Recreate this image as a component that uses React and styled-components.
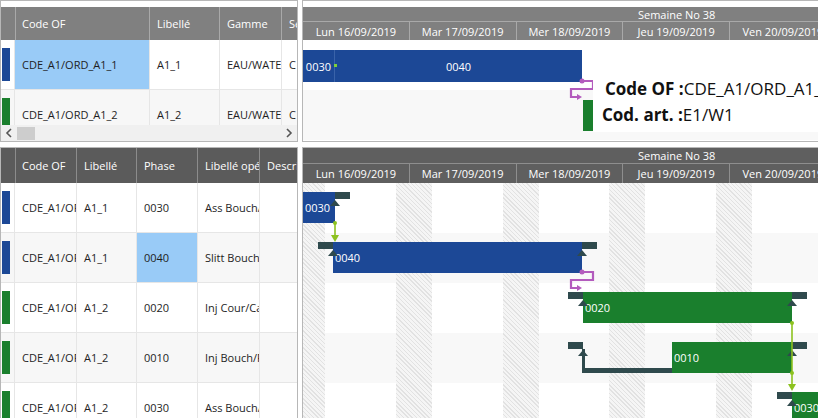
import React from "react";
import styled, { createGlobalStyle } from "styled-components";

const DAY = 106.75;
const DAYS = [
  "Lun 16/09/2019",
  "Mar 17/09/2019",
  "Mer 18/09/2019",
  "Jeu 19/09/2019",
  "Ven 20/09/2019",
  "Sam 21/09/2019",
  "Dim 22/09/2019",
];

const BLUE = "#1c4896";
const GREEN = "#1a7f2d";
const SLATE = "#2f4a4d";
const LINK = "#8dc21f";
const PURPLE = "#b35bbd";

const GlobalStyle = createGlobalStyle`
  html, body {
    margin: 0;
    padding: 0;
    background: #fff;
    overflow: hidden;
  }
  body {
    font-family: "Open Sans", "Noto Sans", sans-serif;
  }
`;

const Page = styled.div`
  width: 818px;
  height: 418px;
  display: flex;
  flex-direction: column;
  gap: 5px;
  overflow: hidden;
  background: #fff;
`;

const Section = styled.div`
  display: flex;
  gap: 4px;
  flex: none;
  height: ${({ $h }) => $h}px;
`;

const GridPanel = styled.div`
  width: 298px;
  flex: none;
  box-sizing: border-box;
  border: 1px solid #b7b7b7;
  padding-top: ${({ $pad }) => $pad || 0}px;
  display: flex;
  flex-direction: column;
  overflow: hidden;
`;

const HeaderRow = styled.div`
  display: grid;
  grid-template-columns: ${({ $cols }) => $cols};
  height: ${({ $h }) => $h}px;
  flex: none;
  background: ${({ $dark }) => ($dark ? "#5b5b5b" : "#808080")};
`;

const HeaderCell = styled.div`
  display: flex;
  align-items: center;
  padding: 0 7px;
  color: #fff;
  font-size: 11px;
  white-space: nowrap;
  overflow: hidden;
  border-right: 1px solid ${({ $dark }) => ($dark ? "#8c8c8c" : "#a9a9a9")};
`;

const Body = styled.div`
  flex: 1;
  overflow: hidden;
`;

const Row = styled.div`
  display: grid;
  grid-template-columns: ${({ $cols }) => $cols};
  height: 50px;
  background: ${({ $alt }) => ($alt ? "#f7f7f7" : "#fff")};
`;

const Cell = styled.div`
  display: flex;
  align-items: center;
  padding: 0 7px;
  font-size: 11px;
  color: #1e1e1e;
  white-space: nowrap;
  overflow: hidden;
  box-sizing: border-box;
  border-right: 1px solid #e6e6e6;
  border-bottom: 1px solid #e6e6e6;
  background: ${({ $selected }) => ($selected ? "#99cbf7" : "transparent")};
`;

const TagCell = styled.div`
  border-right: 1px solid #e6e6e6;
  border-bottom: 1px solid #e6e6e6;
  padding: 8px 0 0 1px;
  box-sizing: border-box;
`;

const ColorTag = styled.div`
  width: 8px;
  height: 33px;
  background: ${({ $color }) => $color};
`;

const ScrollBar = styled.div`
  height: 16px;
  flex: none;
  background: #f0f0f0;
  display: flex;
  align-items: center;
  padding: 0 4px;
  gap: 4px;
  color: #555;
`;

const Thumb = styled.div`
  width: 18px;
  height: 13px;
  background: #cdcdcd;
`;

const Spacer = styled.div`
  flex: 1;
`;

const GanttPanel = styled.div`
  flex: 1;
  min-width: 0;
  box-sizing: border-box;
  border: 1px solid #b7b7b7;
  border-right: none;
  padding-top: ${({ $pad }) => $pad || 0}px;
  display: flex;
  flex-direction: column;
  overflow: hidden;
`;

const Scale = styled.div`
  flex: none;
  width: ${DAY * 7}px;
  background: ${({ $dark }) => ($dark ? "#5f5f5f" : "#808080")};
  color: #fff;
  font-size: 11px;
`;

const WeekRow = styled.div`
  height: ${({ $h }) => $h}px;
  box-sizing: border-box;
  border-bottom: 1px solid ${({ $dark }) => ($dark ? "#8e8e8e" : "#a9a9a9")};
  display: flex;
  align-items: center;
  justify-content: center;
  white-space: nowrap;
`;

const DayRow = styled.div`
  height: ${({ $h }) => $h}px;
  display: flex;
`;

const DayCell = styled.div`
  flex: none;
  width: ${DAY}px;
  box-sizing: border-box;
  border-right: 1px solid ${({ $dark }) => ($dark ? "#8e8e8e" : "#a9a9a9")};
  display: flex;
  align-items: center;
  justify-content: center;
  white-space: nowrap;
`;

const Canvas = styled.div`
  position: relative;
  flex: 1;
  overflow: hidden;
`;

const Band = styled.div`
  height: 50px;
  background: ${({ $alt }) => ($alt ? "#f8f8f8" : "#fff")};
`;

const Hatch = styled.div`
  position: absolute;
  top: 0;
  bottom: 0;
  width: 36px;
  background: repeating-linear-gradient(
    45deg,
    #e2e2e2 0px,
    #e2e2e2 1px,
    #f5f5f5 1px,
    #f5f5f5 3px
  );
`;

const Bar = styled.div`
  position: absolute;
  height: ${({ $h }) => $h}px;
  background: ${({ $color }) => $color};
  color: #fff;
  font-size: 11px;
  display: flex;
  align-items: center;
  padding-left: 2px;
  box-sizing: border-box;
  white-space: nowrap;
  overflow: hidden;
`;

const Segment = styled.div`
  height: 100%;
  display: flex;
  align-items: center;
  justify-content: ${({ $center }) => ($center ? "center" : "flex-start")};
  width: ${({ $w }) => ($w ? `${$w}px` : "auto")};
  flex: ${({ $w }) => ($w ? "none" : "1")};
  border-right: ${({ $split }) => ($split ? "1px solid #3a63a9" : "none")};
`;

const Overlay = styled.svg`
  position: absolute;
  left: 0;
  top: 0;
  overflow: visible;
  pointer-events: none;
`;

const Tooltip = styled.div`
  position: absolute;
  left: 290px;
  top: 36px;
  width: 260px;
  height: 56px;
  background: #fff;
  padding-left: 12px;
  box-sizing: border-box;
  font-size: 17px;
  line-height: 26px;
  color: #111;
  white-space: nowrap;
`;

const TipLine = styled.div`
  margin-left: ${({ $shift }) => $shift || 0}px;
  b {
    font-weight: 700;
  }
`;

function TimeScale({ dark, weekH, dayH }) {
  return (
    <Scale $dark={dark}>
      <WeekRow $h={weekH} $dark={dark}>Semaine No 38</WeekRow>
      <DayRow $h={dayH}>
        {DAYS.map((d) => (
          <DayCell key={d} $dark={dark}>
            {d}
          </DayCell>
        ))}
      </DayRow>
    </Scale>
  );
}

function Chevron({ dir }) {
  return (
    <svg width="8" height="10" viewBox="0 0 8 10">
      <path
        d={dir === "left" ? "M6 1 L2 5 L6 9" : "M2 1 L6 5 L2 9"}
        fill="none"
        stroke="#555"
        strokeWidth="1.6"
      />
    </svg>
  );
}

const TOP_COLS = "14px 135px 70px 62px 60px";
const TOP_HEAD = ["Code OF", "Libellé", "Gamme", "Séquence"];
const TOP_ROWS = [
  { color: BLUE, cells: ["CDE_A1/ORD_A1_1", "A1_1", "EAU/WATER", "C"], sel: 0 },
  { color: GREEN, cells: ["CDE_A1/ORD_A1_2", "A1_2", "EAU/WATER", "C"] },
];

const BOT_COLS = "14px 62px 60px 61px 62px 60px";
const BOT_HEAD = ["Code OF", "Libellé", "Phase", "Libellé opération", "Description"];
const BOT_ROWS = [
  { color: BLUE, cells: ["CDE_A1/ORD_A1_1", "A1_1", "0030", "Ass Bouch/Cour", ""] },
  { color: BLUE, cells: ["CDE_A1/ORD_A1_1", "A1_1", "0040", "Slitt Bouch", ""], sel: 2 },
  { color: GREEN, cells: ["CDE_A1/ORD_A1_2", "A1_2", "0020", "Inj Cour/Cap", ""] },
  { color: GREEN, cells: ["CDE_A1/ORD_A1_2", "A1_2", "0010", "Inj Bouch/Plug", ""] },
  { color: GREEN, cells: ["CDE_A1/ORD_A1_2", "A1_2", "0030", "Ass Bouch/Cour", ""] },
];

function Grid({ cols, head, rows, dark, headH, pad, scroll }) {
  return (
    <GridPanel $pad={pad}>
      <HeaderRow $cols={cols} $h={headH} $dark={dark}>
        <HeaderCell $dark={dark} />
        {head.map((h) => (
          <HeaderCell key={h} $dark={dark}>
            {h}
          </HeaderCell>
        ))}
      </HeaderRow>
      <Body>
        {rows.map((r, i) => (
          <Row key={i} $cols={cols} $alt={i % 2 === 1}>
            <TagCell>
              <ColorTag $color={r.color} />
            </TagCell>
            {r.cells.map((c, j) => (
              <Cell key={j} $selected={r.sel === j}>
                {c}
              </Cell>
            ))}
          </Row>
        ))}
      </Body>
      {scroll && (
        <ScrollBar>
          <Chevron dir="left" />
          <Thumb />
          <Spacer />
          <Chevron dir="right" />
        </ScrollBar>
      )}
    </GridPanel>
  );
}

const BOT_BARS = [
  { x: 0, w: 32, row: 0, color: BLUE, label: "0030" },
  { x: 30, w: 249, row: 1, color: BLUE, label: "0040" },
  { x: 280, w: 209, row: 2, color: GREEN, label: "0020" },
  { x: 369, w: 120, row: 3, color: GREEN, label: "0010" },
  { x: 489, w: 80, row: 4, color: GREEN, label: "0030" },
];

const FLAGS = [
  { e: 32, row: 0, side: "r" },
  { e: 30, row: 1, side: "l" },
  { e: 279, row: 1, side: "r" },
  { e: 280, row: 2, side: "l" },
  { e: 489, row: 2, side: "r" },
  { e: 280, row: 3, side: "l" },
  { e: 489, row: 3, side: "r" },
  { e: 489, row: 4, side: "l" },
];

function Connector({ x, y }) {
  return (
    <g>
      <circle cx={x} cy={y} r="2.5" fill={PURPLE} />
      <path
        d={`M${x} ${y} H${x + 11} V${y + 8} H${x - 11} V${y + 16} H${x - 3}`}
        fill="none"
        stroke={PURPLE}
        strokeWidth="2.2"
      />
      <path d={`M${x - 5} ${y + 13} L${x} ${y + 16} L${x - 5} ${y + 19} Z`} fill={PURPLE} />
    </g>
  );
}

function DownLink({ x, y1, y2, dots = [] }) {
  return (
    <g>
      <line x1={x} y1={y1} x2={x} y2={y2 - 5} stroke={LINK} strokeWidth="1.6" />
      <path d={`M${x - 4} ${y2 - 7} L${x + 4} ${y2 - 7} L${x} ${y2} Z`} fill={LINK} />
      {[y1, ...dots].map((d) => (
        <circle key={d} cx={x} cy={d} r="2" fill={LINK} />
      ))}
    </g>
  );
}

function TopGantt() {
  return (
    <GanttPanel $pad={6}>
      <TimeScale weekH={15} dayH={18} />
      <Canvas>
        <Band />
        <Band $alt />
        <Bar $h={32} $color={BLUE} style={{ left: 0, top: 10, width: 279, paddingLeft: 0 }}>
          <Segment $w={31} $split>
            &nbsp;0030
          </Segment>
          <Segment $center>0040</Segment>
        </Bar>
        <Bar $h={31} $color={GREEN} style={{ left: 280, top: 60, width: 200 }} />
        <Overlay width="520" height="110">
          <rect x="31" y="24" width="3" height="3" fill="#7ed03a" />
          <Connector x={279} y={41} />
        </Overlay>
        <Tooltip>
          <TipLine>
            <b>Code OF :</b>CDE_A1/ORD_A1_2
          </TipLine>
          <TipLine $shift={-3}>
            <b>Cod. art. :</b>E1/W1
          </TipLine>
        </Tooltip>
      </Canvas>
    </GanttPanel>
  );
}

function BottomGantt() {
  return (
    <GanttPanel>
      <TimeScale dark weekH={16} dayH={19} />
      <Canvas>
        {[0, 1, 2, 3, 4].map((i) => (
          <Band key={i} $alt={i % 2 === 1} />
        ))}
        {DAYS.map((d, i) => (
          <Hatch key={d} style={{ left: i * DAY - 14 }} />
        ))}
        {BOT_BARS.map((b, i) => (
          <Bar
            key={i}
            $h={31}
            $color={b.color}
            style={{ left: b.x, top: b.row * 50 + 9, width: b.w }}
          >
            {b.label}
          </Bar>
        ))}
        <Overlay width="520" height="240">
          {FLAGS.map((f, i) => {
            const y = f.row * 50 + 9;
            const x = f.side === "r" ? f.e : f.e - 15;
            return (
              <g key={i} fill={SLATE}>
                <rect x={x} y={y} width="15" height="7" />
                <polygon points={`${f.e - 5},${y + 14} ${f.e + 5},${y + 14} ${f.e},${y + 8}`} />
              </g>
            );
          })}
          <rect x="279" y="166" width="3" height="24" fill={SLATE} />
          <rect x="279" y="185" width="90" height="5" fill={SLATE} />
          <DownLink x={32} y1={40} y2={59} />
          <DownLink x={489} y1={140} y2={208} dots={[190]} />
          <Connector x={279} y={89} />
        </Overlay>
      </Canvas>
    </GanttPanel>
  );
}

export default function App() {
  return (
    <>
      <GlobalStyle />
      <Page>
        <Section $h={142}>
          <Grid cols={TOP_COLS} head={TOP_HEAD} rows={TOP_ROWS} headH={33} pad={6} scroll />
          <TopGantt />
        </Section>
        <Section $h={290}>
          <Grid cols={BOT_COLS} head={BOT_HEAD} rows={BOT_ROWS} headH={35} dark />
          <BottomGantt />
        </Section>
      </Page>
    </>
  );
}
